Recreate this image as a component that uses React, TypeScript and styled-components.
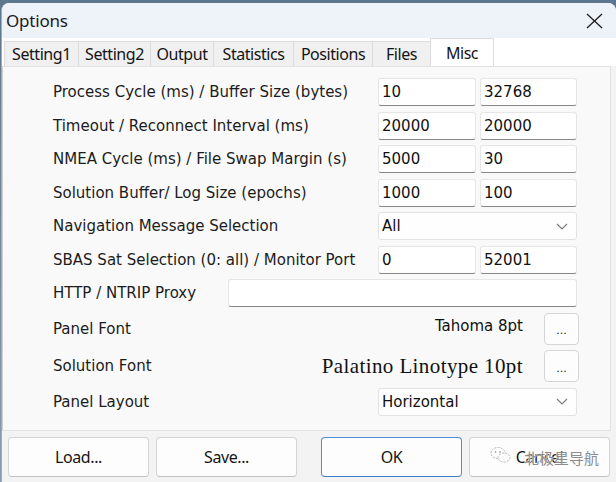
import React from 'react';
import styled, { createGlobalStyle } from 'styled-components';

const GlobalStyle = createGlobalStyle`
  html, body {
    margin: 0;
    padding: 0;
  }
  body {
    width: 616px;
    height: 482px;
    overflow: hidden;
    background: #70859a;
  }
`;

const Frame = styled.div`
  width: 616px;
  height: 482px;
  box-sizing: border-box;
  padding: 3px 0 0 1px;
  background: linear-gradient(#5d7690, #8c9cac);
`;

const Window = styled.div`
  position: relative;
  display: flex;
  flex-direction: column;
  height: 479px;
  background: #f3f3f3;
  border-left: 1px solid #a7abb0;
  border-radius: 8px 8px 0 0;
  overflow: hidden;
`;

const TitleBar = styled.div`
  display: flex;
  align-items: center;
  justify-content: space-between;
  height: 35px;
  padding: 0 13px 0 4px;
  background: #eef3f9;
`;

const Title = styled.div`
  font-family: "Noto Sans", "Open Sans", sans-serif;
  font-size: 17px;
  color: #1b1b1b;
  letter-spacing: -0.2px;
`;

const TabBar = styled.div`
  display: flex;
  align-items: flex-end;
  height: 28px;
  padding-left: 2px;
  background: #ffffff;
`;

const Tab = styled.div<{ $w: number; $active?: boolean }>`
  box-sizing: border-box;
  width: ${p => p.$w}px;
  height: ${p => (p.$active ? 28 : 25)}px;
  margin-left: -1px;
  display: flex;
  align-items: center;
  justify-content: center;
  border: 1px solid #dcdcdc;
  border-bottom: none;
  background: ${p => (p.$active ? '#ffffff' : '#f0f0f0')};
  font-family: "Noto Sans", "Open Sans", sans-serif;
  font-size: 16px;
  letter-spacing: -0.45px;
  color: #141414;
  &:first-child {
    margin-left: 0;
  }
`;

const Panel = styled.div`
  box-sizing: border-box;
  height: 365px;
  margin-right: 5px;
  padding: 11px 0 0 50px;
  display: flex;
  flex-direction: column;
  gap: 5.5px;
  background: #f9f9f9;
  border: 1px solid #e2e2e2;
  border-left-color: #cfcfcf;
`;

const Row = styled.div<{ $cols: string; $h?: number }>`
  display: grid;
  grid-template-columns: ${p => p.$cols};
  column-gap: 4px;
  align-items: center;
  width: 526px;
  height: ${p => p.$h ?? 28}px;
`;

const FontRow = styled(Row)`
  column-gap: 21px;
`;

const Label = styled.div`
  font-family: "DejaVu Sans", Verdana, sans-serif;
  font-size: 15px;
  color: #1c1c1c;
  white-space: nowrap;
`;

const Field = styled.input`
  box-sizing: border-box;
  width: 100%;
  height: 28px;
  margin: 0;
  padding: 0 3px;
  border: 1px solid #e6e6e6;
  border-bottom-color: #878787;
  border-radius: 3px;
  background: #ffffff;
  font-family: "DejaVu Sans", Verdana, sans-serif;
  font-size: 15px;
  color: #111;
  outline: none;
`;

const Select = styled.div`
  box-sizing: border-box;
  height: 28px;
  display: flex;
  align-items: center;
  justify-content: space-between;
  padding: 0 8px 0 3px;
  border: 1px solid #e3e3e3;
  border-radius: 3px;
  background: #fefefe;
  font-family: "DejaVu Sans", Verdana, sans-serif;
  font-size: 15px;
  color: #111;
`;

const FontValue = styled.div<{ $serif?: boolean }>`
  text-align: right;
  white-space: nowrap;
  font-family: ${p => (p.$serif ? '"Liberation Serif", "DejaVu Serif", serif' : '"DejaVu Sans", Verdana, sans-serif')};
  font-size: ${p => (p.$serif ? 21 : 15)}px;
  letter-spacing: ${p => (p.$serif ? 0.4 : 0)}px;
  color: #111;
  margin-top: ${p => (p.$serif ? 0 : -5)}px;
`;

const DotsButton = styled.div`
  box-sizing: border-box;
  height: 32px;
  display: flex;
  align-items: center;
  justify-content: center;
  padding-top: 4px;
  border: 1px solid #d6d6d6;
  border-radius: 4px;
  background: #fdfdfd;
  font-family: "DejaVu Sans", sans-serif;
  font-size: 11px;
  color: #222;
`;

const ButtonBar = styled.div`
  display: flex;
  gap: 7px;
  padding: 6px 0 0 6px;
`;

const Button = styled.div<{ $primary?: boolean }>`
  box-sizing: border-box;
  width: 141px;
  height: 40px;
  display: flex;
  align-items: center;
  justify-content: center;
  margin-left: ${p => (p.$primary ? 17 : 0)}px;
  border: 1px solid ${p => (p.$primary ? '#4d8fd6' : '#d4d4d4')};
  border-bottom-color: ${p => (p.$primary ? '#3f7fc4' : '#c2c2c2')};
  border-radius: 4px;
  background: #fdfdfd;
  font-family: "Noto Sans", "Open Sans", sans-serif;
  font-size: 16px;
  letter-spacing: -0.4px;
  color: #141414;
`;

const Watermark = styled.div`
  position: absolute;
  left: 488px;
  top: 439px;
  display: flex;
  align-items: center;
  gap: 12px;
  pointer-events: none;
`;

const WatermarkText = styled.span`
  font-family: "Noto Sans CJK SC", sans-serif;
  font-size: 15px;
  color: #8c8c8c;
  text-shadow: 0 0 2px #ffffff, 0 0 1px #ffffff;
  margin-top: 5px;
`;

const Chevron = () => (
  <svg width="12" height="7" viewBox="0 0 12 7">
    <polyline points="1,1 6,6 11,1" fill="none" stroke="#7a7a7a" strokeWidth="1.1" />
  </svg>
);

const CloseIcon = () => (
  <svg width="17" height="16" viewBox="0 0 17 16">
    <line x1="1" y1="1" x2="16" y2="15" stroke="#1e1e1e" strokeWidth="1.3" />
    <line x1="16" y1="1" x2="1" y2="15" stroke="#1e1e1e" strokeWidth="1.3" />
  </svg>
);

const WeChatMark = () => (
  <svg width="22" height="18" viewBox="0 0 22 18">
    <ellipse cx="8" cy="7" rx="7" ry="5.5" fill="rgba(255,255,255,0.7)" stroke="#b4b4b4" strokeWidth="1" strokeDasharray="2 1.2" />
    <ellipse cx="14" cy="11.5" rx="6" ry="4.5" fill="rgba(255,255,255,0.7)" stroke="#b4b4b4" strokeWidth="1" strokeDasharray="2 1.2" />
    <circle cx="5.5" cy="6" r="0.9" fill="#aaa" />
    <circle cx="10" cy="6" r="0.9" fill="#aaa" />
  </svg>
);

const tabs = [
  { name: 'Setting1', w: 75 },
  { name: 'Setting2', w: 73 },
  { name: 'Output', w: 64 },
  { name: 'Statistics', w: 81 },
  { name: 'Positions', w: 80 },
  { name: 'Files', w: 59 },
  { name: 'Misc', w: 64, active: true },
];

const pairs = [
  { label: 'Process Cycle (ms) / Buffer Size (bytes)', a: '10', b: '32768' },
  { label: 'Timeout / Reconnect Interval (ms)', a: '20000', b: '20000' },
  { label: 'NMEA Cycle (ms) / File Swap Margin (s)', a: '5000', b: '30' },
  { label: 'Solution Buffer/ Log Size (epochs)', a: '1000', b: '100' },
];

const PAIR_COLS = '321px 98px 97px';
const SELECT_COLS = '321px 199px';

export default function App() {
  return (
    <Frame>
      <GlobalStyle />
      <Window>
        <TitleBar>
          <Title>Options</Title>
          <CloseIcon />
        </TitleBar>
        <TabBar>
          {tabs.map(t => (
            <Tab key={t.name} $w={t.w} $active={t.active}>
              {t.name}
            </Tab>
          ))}
        </TabBar>
        <Panel>
          {pairs.map(p => (
            <Row key={p.label} $cols={PAIR_COLS}>
              <Label>{p.label}</Label>
              <Field readOnly value={p.a} />
              <Field readOnly value={p.b} />
            </Row>
          ))}
          <Row $cols={SELECT_COLS}>
            <Label>Navigation Message Selection</Label>
            <Select>
              <span>All</span>
              <Chevron />
            </Select>
          </Row>
          <Row $cols={PAIR_COLS}>
            <Label>SBAS Sat Selection (0: all) / Monitor Port</Label>
            <Field readOnly value="0" />
            <Field readOnly value="52001" />
          </Row>
          <Row $cols="171px 349px">
            <Label>HTTP / NTRIP Proxy</Label>
            <Field readOnly value="" />
          </Row>
          <FontRow $cols="auto 1fr 35px" $h={32}>
            <Label>Panel Font</Label>
            <FontValue>Tahoma 8pt</FontValue>
            <DotsButton>...</DotsButton>
          </FontRow>
          <FontRow $cols="auto 1fr 35px" $h={32}>
            <Label>Solution Font</Label>
            <FontValue $serif>Palatino Linotype 10pt</FontValue>
            <DotsButton>...</DotsButton>
          </FontRow>
          <Row $cols={SELECT_COLS}>
            <Label>Panel Layout</Label>
            <Select>
              <span>Horizontal</span>
              <Chevron />
            </Select>
          </Row>
        </Panel>
        <ButtonBar>
          <Button>Load...</Button>
          <Button>Save...</Button>
          <Button $primary>OK</Button>
          <Button>Cancel</Button>
        </ButtonBar>
        <Watermark>
          <WeChatMark />
          <WatermarkText>北极星导航</WatermarkText>
        </Watermark>
      </Window>
    </Frame>
  );
}
